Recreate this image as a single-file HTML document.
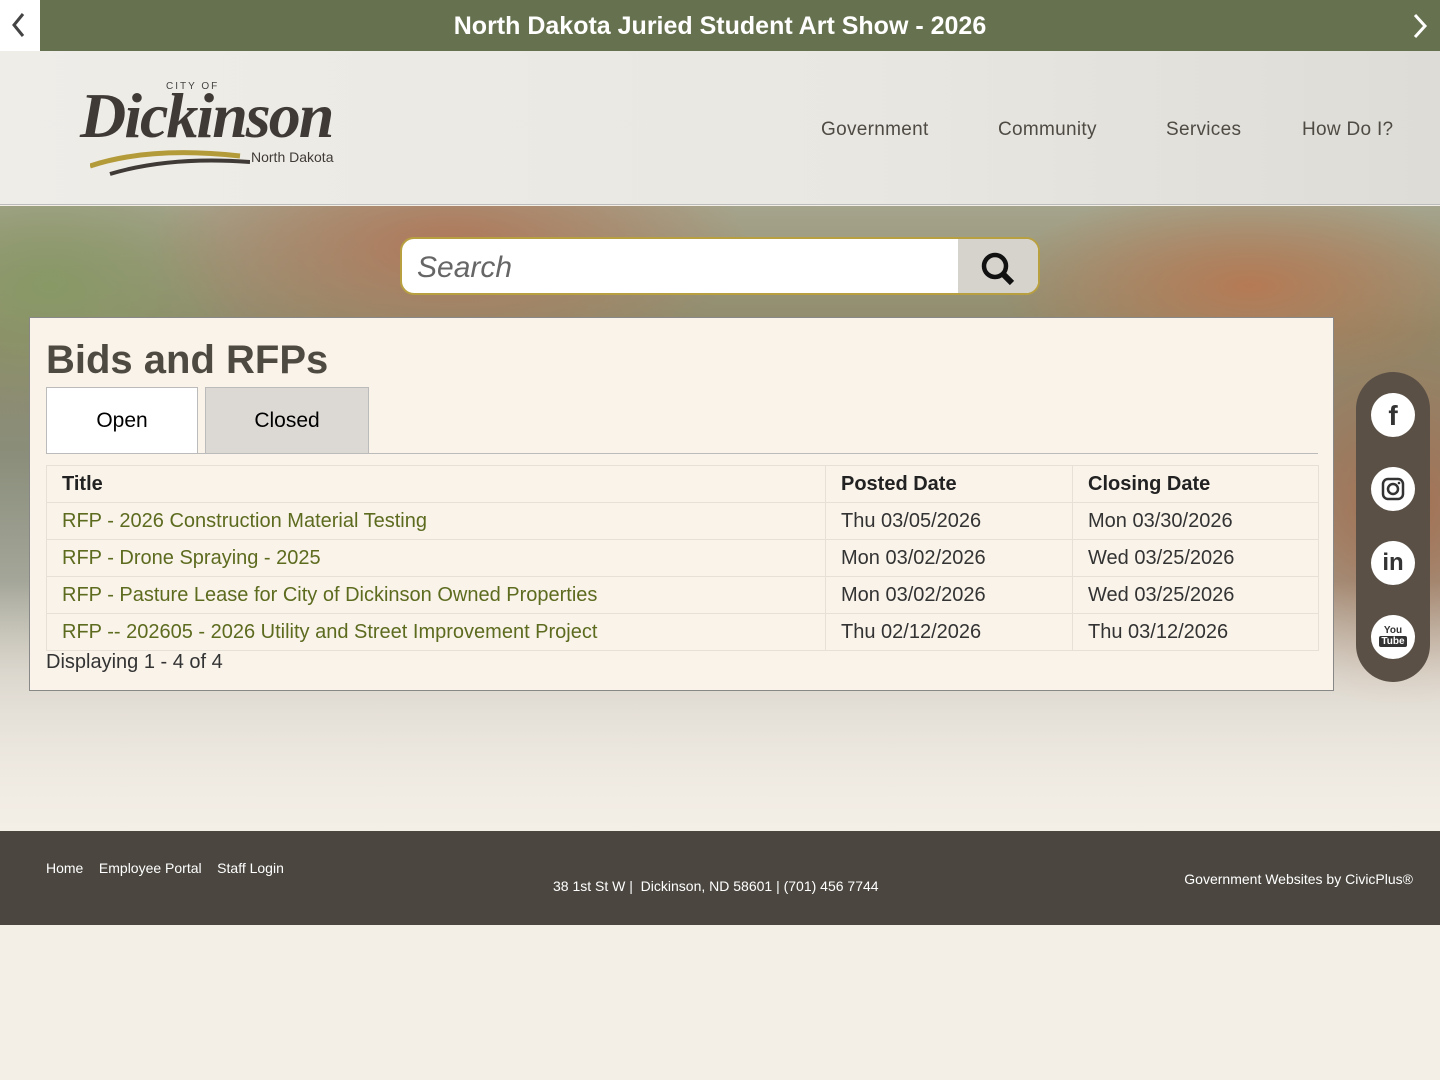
<!DOCTYPE html>
<html><head><meta charset="utf-8"><style>
*{margin:0;padding:0;box-sizing:border-box}
body{width:1440px;height:1080px;background:#f3eee6;font-family:"Liberation Sans",sans-serif;position:relative;overflow:hidden}
.top{position:absolute;top:0;left:0;width:1440px;height:51px;background:#66724f;color:#fff;text-align:center;font:bold 25px/52px "Liberation Sans",sans-serif}
.top .l{position:absolute;left:0;top:0;width:40px;height:51px;background:#fff}
.hdr{position:absolute;top:51px;left:0;width:1440px;height:154px;background:linear-gradient(90deg,#efede8,#e9e7e1 60%,#dedcd6);border-bottom:1px solid #bbb}
.nav{position:absolute;top:119px;font-size:19px;color:#4e4a44;letter-spacing:.3px}
.hero{position:absolute;top:206px;left:0;width:1440px;height:625px;background:
linear-gradient(180deg,rgba(243,238,230,0) 0,rgba(243,238,230,0) 60%,#f3eee6 100%),
radial-gradient(ellipse 300px 120px at 450px 40px,#b0785a,transparent),
radial-gradient(ellipse 250px 100px at 1250px 80px,#b57a55,transparent),
radial-gradient(ellipse 200px 200px at 1400px 300px,#a56f50,transparent),
radial-gradient(ellipse 200px 120px at 50px 80px,#889966,transparent),
linear-gradient(180deg,#a5a48c 0,#8f8a6a 20%,#8a8e7a 40%,#a4a699 60%,#cfcac0 75%,#e8e3da 100%)}
.search{position:absolute;top:237px;left:400px;width:640px;height:58px;border:2px solid #b8a040;border-radius:14px;background:#fff;overflow:hidden}
.search span{position:absolute;left:15px;top:12px;font-size:30px;font-style:italic;color:#666}
.search .b{position:absolute;right:0;top:0;width:80px;height:58px;background:#d6d3cd}
.panel{position:absolute;top:317px;left:29px;width:1305px;height:374px;background:#f9f3ea;border:1px solid #888}
h1{position:absolute;left:16px;top:20px;font-size:40px;color:#4e4a42;font-weight:bold}
.tab{position:absolute;top:69px;height:67px;font-size:21px;text-align:center;line-height:66px;border:1px solid #bbb}
table{position:absolute;left:16px;top:147px;width:1273px;border-collapse:collapse;font-size:20px}
td,th{border:1px solid #e6e0d6;height:37px;padding-left:15px;text-align:left;color:#333}
th{font-weight:bold;color:#222}
td a{color:#5d6b1f;text-decoration:none}
.soc{position:absolute;left:1356px;top:372px;width:74px;height:310px;background:#5a5046;border-radius:37px}
.soc div{position:absolute;left:15px;width:44px;height:44px;border-radius:50%;background:#fff;color:#333;text-align:center;font-weight:bold}
.foot{position:absolute;top:831px;left:0;width:1440px;height:94px;background:#4b4740;color:#fff;font-size:14px}
</style></head><body>
<div class="top"><div class="l"><svg width="40" height="51"><path d="M23 14 L14 25 L23 36" stroke="#444" stroke-width="3" fill="none"/></svg></div>North Dakota Juried Student Art Show - 2026
<svg style="position:absolute;right:10px;top:13px" width="20" height="26"><path d="M5 2 L15 13 L5 24" stroke="#fff" stroke-width="3" fill="none"/></svg></div>
<div class="hdr">
<div style="position:absolute;left:166px;top:30px;font-size:10px;letter-spacing:2px;color:#444">CITY OF</div>
<div style="position:absolute;left:80px;top:28px;font:italic bold 64px 'Liberation Serif',serif;color:#3f3a35;letter-spacing:-2px">Dickinson</div>
<svg style="position:absolute;left:90px;top:95px" width="160" height="30"><path d="M0 20 Q60 0 150 10" stroke="#b49b3a" stroke-width="5" fill="none"/><path d="M20 28 Q80 10 160 16" stroke="#3f3a35" stroke-width="4" fill="none"/></svg>
<div style="position:absolute;left:251px;top:98px;font-size:14px;color:#3f3a35">North Dakota</div>
<div class="nav" style="left:821px;top:68px">Government</div>
<div class="nav" style="left:998px;top:68px">Community</div>
<div class="nav" style="left:1166px;top:68px">Services</div>
<div class="nav" style="left:1302px;top:68px">How Do I?</div>
</div>
<div class="hero"></div>
<div class="search"><span>Search</span><div class="b"><svg width="80" height="58"><circle cx="37" cy="27" r="11" stroke="#111" stroke-width="4.5" fill="none"/><path d="M45 35 L54 44" stroke="#111" stroke-width="6"/></svg></div></div>
<div class="panel">
<h1>Bids and RFPs</h1>
<div class="tab" style="left:16px;width:152px;background:#fff;border-bottom:none">Open</div>
<div class="tab" style="left:175px;width:164px;background:#dcd9d4">Closed</div>
<div style="position:absolute;left:16px;right:15px;top:135px;border-top:1px solid #bbb"></div>
<table>
<tr><th style="width:779px">Title</th><th style="width:247px">Posted Date</th><th>Closing Date</th></tr>
<tr><td><a>RFP - 2026 Construction Material Testing</a></td><td>Thu 03/05/2026</td><td>Mon 03/30/2026</td></tr>
<tr><td><a>RFP - Drone Spraying - 2025</a></td><td>Mon 03/02/2026</td><td>Wed 03/25/2026</td></tr>
<tr><td><a>RFP - Pasture Lease for City of Dickinson Owned Properties</a></td><td>Mon 03/02/2026</td><td>Wed 03/25/2026</td></tr>
<tr><td><a>RFP -- 202605 - 2026 Utility and Street Improvement Project</a></td><td>Thu 02/12/2026</td><td>Thu 03/12/2026</td></tr>
</table>
<div style="position:absolute;left:16px;top:333px;font-size:20px;color:#333">Displaying 1 - 4 of 4</div>
</div>
<div class="soc">
<div style="top:21px;font-size:28px;line-height:46px;font-family:'Liberation Sans'">f</div>
<div style="top:95px"><svg width="44" height="44"><rect x="12" y="12" width="20" height="20" rx="5" stroke="#333" stroke-width="2.5" fill="none"/><circle cx="22" cy="22" r="5" stroke="#333" stroke-width="2.5" fill="none"/><circle cx="28" cy="16" r="1.3" fill="#333"/></svg></div>
<div style="top:169px;font-size:24px;line-height:44px">in</div>
<div style="top:243px;font-size:10px;line-height:11px;padding-top:10px">You<br><span style="background:#333;color:#fff;padding:0 2px;border-radius:2px">Tube</span></div>
</div>
<div class="foot">
<div style="position:absolute;left:46px;top:29px">Home &nbsp;&nbsp; Employee Portal &nbsp;&nbsp; Staff Login</div>
<div style="position:absolute;left:553px;top:47px">38 1st St W | &nbsp;Dickinson, ND 58601 | (701) 456 7744</div>
<div style="position:absolute;right:27px;top:40px">Government Websites by CivicPlus®</div>
</div>
</body></html>
